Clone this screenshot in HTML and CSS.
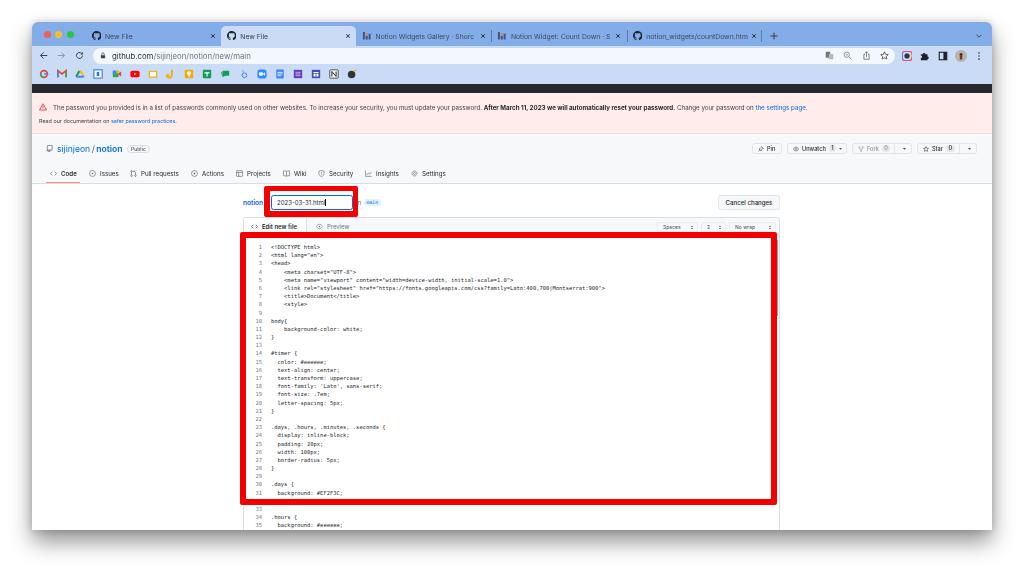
FILE: index.html
```html
<!DOCTYPE html>
<html lang="en">
<head>
<meta charset="utf-8">
<title>New File</title>
<link rel="stylesheet" href="styles.css">
</head>
<body>
<svg class="defs" width="0" height="0">
<symbol id="gh" viewBox="0 0 16 16"><path d="M8 0C3.58 0 0 3.58 0 8c0 3.54 2.29 6.53 5.47 7.59.4.07.55-.17.55-.38 0-.19-.01-.82-.01-1.49-2.01.37-2.53-.49-2.69-.94-.09-.23-.48-.94-.82-1.13-.28-.15-.68-.52-.01-.53.63-.01 1.08.58 1.23.82.72 1.21 1.87.87 2.33.66.07-.52.28-.87.51-1.07-1.78-.2-3.64-.89-3.64-3.95 0-.87.31-1.59.82-2.15-.08-.2-.36-1.02.08-2.12 0 0 .67-.21 2.2.82.64-.18 1.32-.27 2-.27.68 0 1.36.09 2 .27 1.53-1.04 2.2-.82 2.2-.82.44 1.1.16 1.92.08 2.12.51.56.82 1.27.82 2.15 0 3.07-1.87 3.75-3.65 3.95.29.25.54.73.54 1.48 0 1.07-.01 1.93-.01 2.2 0 .21.15.46.55.38A8.013 8.013 0 0016 8c0-4.42-3.58-8-8-8z"/></symbol>
<symbol id="x" viewBox="0 0 10 10"><path d="M2 2l6 6M8 2l-6 6" fill="none" stroke="currentColor" stroke-width="1.5"/></symbol>
<symbol id="bars" viewBox="0 0 10 10"><path d="M1 1h2v8H1zM4 5h2v4H4zM7 3h2v6H7z" fill="#45506a"/><path d="M4 2h2v2H4z" fill="#e0803c"/></symbol>
<symbol id="caret" viewBox="0 0 8 8"><path d="M1.500 3h5L4 6z" fill="currentColor"/></symbol>
<symbol id="code" viewBox="0 0 16 16"><path d="M5 4L1 8l4 4M11 4l4 4-4 4" fill="none" stroke="currentColor" stroke-width="1.600"/></symbol>
<symbol id="circ" viewBox="0 0 16 16"><circle cx="8" cy="8" r="6.800" fill="none" stroke="currentColor" stroke-width="1.400"/><circle cx="8" cy="8" r="1.600" fill="currentColor"/></symbol>
<symbol id="pr" viewBox="0 0 16 16"><g fill="none" stroke="currentColor" stroke-width="1.400"><circle cx="3.500" cy="3" r="1.800"/><circle cx="3.500" cy="13" r="1.800"/><circle cx="12.500" cy="13" r="1.800"/><path d="M3.500 5v6M12.500 11V5.500A2.500 2.500 0 0010 3H8M9.500 1L7.500 3l2 2"/></g></symbol>
<symbol id="play" viewBox="0 0 16 16"><circle cx="8" cy="8" r="6.800" fill="none" stroke="currentColor" stroke-width="1.400"/><path d="M6.500 5l4 3-4 3z" fill="currentColor"/></symbol>
<symbol id="table" viewBox="0 0 16 16"><g fill="none" stroke="currentColor" stroke-width="1.400"><rect x="1" y="1.500" width="14" height="13" rx="1.500"/><path d="M1 5.500h14M6 5.500v9"/></g></symbol>
<symbol id="book" viewBox="0 0 16 16"><path d="M8 3.500C6.500 2 4 2 1 2v11c3 0 5.500 0 7 1.500 1.500-1.500 4-1.500 7-1.500V2c-3 0-5.500 0-7 1.500zV14" fill="none" stroke="currentColor" stroke-width="1.400"/></symbol>
<symbol id="shield" viewBox="0 0 16 16"><path d="M8 1l6 2v5c0 3.500-3 6-6 7-3-1-6-3.500-6-7V3z" fill="none" stroke="currentColor" stroke-width="1.400"/><path d="M8 4.500v4M8 10v1.500" stroke="currentColor" stroke-width="1.400"/></symbol>
<symbol id="graph" viewBox="0 0 16 16"><path d="M1 1.500V14.500h14M4 11l3.500-4 3 2.500L15 4.500" fill="none" stroke="currentColor" stroke-width="1.400"/></symbol>
<symbol id="gear" viewBox="0 0 16 16"><circle cx="8" cy="8" r="2.300" fill="none" stroke="currentColor" stroke-width="1.300"/><circle cx="8" cy="8" r="5.600" fill="none" stroke="currentColor" stroke-width="2" stroke-dasharray="2.200 1.300"/></symbol>
<symbol id="repo" viewBox="0 0 16 16"><path d="M3 14.500V2.500A1.500 1.500 0 014.500 1H14v10.500H4.500A1.500 1.500 0 003 13M6 11.500v4l1.500-1 1.500 1v-4" fill="none" stroke="currentColor" stroke-width="1.500"/></symbol>
<symbol id="eye" viewBox="0 0 16 16"><path d="M1 8c2-3.500 4.300-5 7-5s5 1.500 7 5c-2 3.500-4.300 5-7 5s-5-1.500-7-5z" fill="none" stroke="currentColor" stroke-width="1.400"/><circle cx="8" cy="8" r="1.800" fill="currentColor"/></symbol>
<symbol id="pin" viewBox="0 0 16 16"><path d="M9.500 1.500l5 5-2.500.8-3 3-.6 3L2.600 7.500l3-.6 3-3zM5.500 10.500L1.500 14.500" fill="none" stroke="currentColor" stroke-width="1.400"/></symbol>
<symbol id="fork" viewBox="0 0 16 16"><g fill="none" stroke="currentColor" stroke-width="1.400"><circle cx="3.500" cy="3" r="1.700"/><circle cx="12.500" cy="3" r="1.700"/><circle cx="8" cy="13" r="1.700"/><path d="M3.500 5v1.500a1.500 1.500 0 001.500 1.500h6a1.500 1.500 0 001.500-1.500V5M8 8v3"/></g></symbol>
<symbol id="star" viewBox="0 0 16 16"><path d="M8 1.500l2 4.300 4.700.6-3.500 3.200.9 4.700L8 12l-4.100 2.300.9-4.700L1.300 6.400 6 5.800z" fill="none" stroke="currentColor" stroke-width="1.400"/></symbol>
<symbol id="sort" viewBox="0 0 8 10"><path d="M1.500 4L4 1.500 6.500 4zM1.500 6L4 8.500 6.500 6z" fill="currentColor"/></symbol>
</svg>

<div class="window">
  <div class="tabstrip">
    <div class="lights"><i class="light red"></i><i class="light amber"></i><i class="light green"></i></div>
    <div class="tab"><svg class="favicon"><use href="#gh"/></svg><span class="tab-title">New File</span><svg class="tab-x"><use href="#x"/></svg></div>
    <div class="tab active"><svg class="favicon"><use href="#gh"/></svg><span class="tab-title">New File</span><svg class="tab-x"><use href="#x"/></svg></div>
    <div class="tab"><svg class="favicon"><use href="#bars"/></svg><span class="tab-title">Notion Widgets Gallery · Shorc</span><svg class="tab-x"><use href="#x"/></svg></div>
    <div class="tab sep"><svg class="favicon"><use href="#bars"/></svg><span class="tab-title">Notion Widget: Count Down · S</span><svg class="tab-x"><use href="#x"/></svg></div>
    <div class="tab sep end"><svg class="favicon"><use href="#gh"/></svg><span class="tab-title">notion_widgets/countDown.htm</span><svg class="tab-x"><use href="#x"/></svg></div>
    <svg class="newtab" viewBox="0 0 10 10"><path d="M5 .5v9M.5 5h9" stroke="#3c4043" stroke-width="1.300"/></svg>
    <svg class="tabchev" viewBox="0 0 10 10"><path d="M2 3.500l3 3 3-3" fill="none" stroke="#3c4043" stroke-width="1.200"/></svg>
  </div>

  <div class="toolbar">
    <svg class="navbtn" viewBox="0 0 12 12"><path d="M11 6H2M6 2L2 6l4 4" fill="none" stroke="#3c4043" stroke-width="1.300"/></svg>
    <svg class="navbtn" viewBox="0 0 12 12"><path d="M1 6h9M6 2l4 4-4 4" fill="none" stroke="#8a97ab" stroke-width="1.300"/></svg>
    <svg class="navbtn" viewBox="0 0 12 12"><path d="M10 6a4 4 0 11-1.200-2.900" fill="none" stroke="#3c4043" stroke-width="1.300"/><path d="M10.500 1v3.500H7z" fill="#3c4043"/></svg>
    <div class="omnibox">
      <svg class="lock" viewBox="0 0 8 10"><path d="M1 4.500h6V9H1z" fill="#3c4043"/><path d="M2.300 4.500V3a1.700 1.700 0 013.400 0v1.500" fill="none" stroke="#3c4043"/></svg>
      <span class="url"><b>github.com</b>/sijinjeon/notion/new/main</span>
      <div class="omni-icons">
        <svg class="omni-icon" viewBox="0 0 12 12"><rect x="1" y="1" width="6" height="8" fill="#70757a"/><rect x="5" y="4" width="6" height="7" fill="#b4b9c0"/></svg>
        <svg class="omni-icon" viewBox="0 0 12 12"><circle cx="5" cy="5" r="3.500" fill="none" stroke="#70757a"/><path d="M7.500 7.500L11 11M3.500 5h3" stroke="#70757a"/></svg>
        <svg class="omni-icon" viewBox="0 0 12 12"><path d="M4 4.500H2.500V11h7V4.500H8M6 8V1M4 3l2-2 2 2" fill="none" stroke="#5f6368"/></svg>
        <svg class="omni-icon" viewBox="0 0 16 16"><use href="#star" color="#3c4043"/></svg>
      </div>
    </div>
    <div class="ext-icons">
      <svg class="ext" viewBox="0 0 12 12"><rect x=".5" y=".5" width="11" height="11" rx="2.500" fill="none" stroke="#e0508f" stroke-width="1.500"/><rect x="3" y="3" width="6" height="6" rx="2" fill="#334"/><path d="M.5 8v-5" stroke="#4a8fe0" stroke-width="1.500"/><path d="M11.500 3v5" stroke="#f0b020" stroke-width="1.500"/></svg>
      <svg class="ext" viewBox="0 0 12 12"><path d="M1 4h2.500a1.500 1.500 0 013 0H9v2.500a1.500 1.500 0 010 3V11H1V8.500a1.500 1.500 0 000-3z" fill="#202124"/></svg>
      <svg class="ext" viewBox="0 0 12 12"><rect x="1.500" y="1.500" width="9" height="9" fill="none" stroke="#202124" stroke-width="1.300"/><rect x="6.500" y="1.500" width="4" height="9" fill="#202124"/></svg>
      <svg class="ext avatar" viewBox="0 0 12 12"><circle cx="6" cy="6" r="6" fill="#b8b4ac"/><circle cx="6" cy="4.500" r="1.500" fill="#4a2a20"/><rect x="4.800" y="6" width="2.400" height="3.500" fill="#7a3020"/></svg>
      <svg class="ext" viewBox="0 0 12 12"><circle cx="6" cy="2.500" r="1" fill="#3c4043"/><circle cx="6" cy="6" r="1" fill="#3c4043"/><circle cx="6" cy="9.500" r="1" fill="#3c4043"/></svg>
    </div>
  </div>

  <div class="bookmarks">
    <svg class="bm" viewBox="0 0 12 12"><circle cx="6" cy="6" r="4" fill="none" stroke="#ea4335" stroke-width="2"/><path d="M2 6a4 4 0 004 4" fill="none" stroke="#34a853" stroke-width="2"/><path d="M6 6h5" stroke="#4285f4" stroke-width="2"/></svg>
    <svg class="bm" viewBox="0 0 12 12"><path d="M1 10V2l5 4 5-4v8" fill="none" stroke="#ea4335" stroke-width="2"/><path d="M1 10V3" stroke="#4285f4" stroke-width="2"/><path d="M11 10V3" stroke="#34a853" stroke-width="2"/></svg>
    <svg class="bm" viewBox="0 0 12 12"><path d="M4.500 1.500h3L11.500 8H8.500z" fill="#fbbc04"/><path d="M4.500 1.500L.5 8 2 10.500 6 3.500z" fill="#0f9d58"/><path d="M2 10.500h8L11.500 8h-8z" fill="#4285f4"/></svg>
    <svg class="bm" viewBox="0 0 12 12"><rect x="1" y="1" width="10" height="10" fill="#fff" stroke="#4285f4" stroke-width="1.500"/><rect x="4.500" y="3.500" width="3" height="5" fill="#1a73e8"/><path d="M8 11l3-3v3z" fill="#fbbc04"/></svg>
    <svg class="bm" viewBox="0 0 12 12"><rect x="1" y="2" width="7" height="8" rx="1" fill="#34a853"/><rect x="1" y="2" width="4" height="4" fill="#4285f4"/><path d="M8 2h-3v3h3z" fill="#fbbc04"/><path d="M8 5l3-2v6L8 7z" fill="#ea4335"/></svg>
    <svg class="bm" viewBox="0 0 12 12"><rect x=".5" y="2" width="11" height="8" rx="2" fill="#f00"/><path d="M5 4.500L7.500 6 5 7.500z" fill="#fff"/></svg>
    <svg class="bm" viewBox="0 0 12 12"><rect x="1" y="2" width="10" height="8.500" rx="1" fill="#f4b400"/><rect x="2.500" y="3.500" width="7" height="5.500" fill="#fff"/></svg>
    <svg class="bm" viewBox="0 0 12 12"><path d="M7 1v6.500a3 3 0 01-6 0h3" fill="none" stroke="#f9ab00" stroke-width="2.200"/></svg>
    <svg class="bm" viewBox="0 0 12 12"><rect x="1" y="1" width="10" height="10" rx="1" fill="#f9ab00"/><circle cx="6" cy="5" r="2.300" fill="#fff"/><rect x="4.800" y="7.500" width="2.400" height="1.500" fill="#fff"/></svg>
    <svg class="bm" viewBox="0 0 12 12"><rect x="1" y="1" width="10" height="10" rx="1" fill="#0f9d58"/><path d="M3 4h6v1.300H3zM5.400 4h1.300v5H5.400z" fill="#fff"/></svg>
    <svg class="bm" viewBox="0 0 12 12"><path d="M3 2h8v6H6l-3 2z" fill="#0f9d58"/><path d="M1 4h2v6z" fill="#34a853"/></svg>
    <svg class="bm" viewBox="0 0 12 12"><circle cx="6.500" cy="7.500" r="2.800" fill="none" stroke="#4285f4" stroke-width="1.200"/><path d="M4 1l2 4" stroke="#8ab4f8" stroke-width="1.400"/></svg>
    <svg class="bm" viewBox="0 0 12 12"><rect x=".5" y=".5" width="11" height="11" rx="3" fill="#2d8cff"/><rect x="2.500" y="4" width="4.500" height="4" rx="1" fill="#fff"/><path d="M7.500 5.500L9.500 4v4l-2-1.500z" fill="#fff"/></svg>
    <svg class="bm" viewBox="0 0 12 12"><rect x="1.500" y=".5" width="9" height="11" rx="1" fill="#4285f4"/><path d="M3 4h6M3 6h6M3 8h4" stroke="#fff"/></svg>
    <svg class="bm" viewBox="0 0 12 12"><rect x="1" y="1" width="10" height="10" fill="#673ab7"/><path d="M3 4h6M3 6h6M3 8h6" stroke="#d1c4e9"/></svg>
    <svg class="bm" viewBox="0 0 12 12"><rect x="1" y="1" width="10" height="10" fill="#3f51b5"/><path d="M3 3.500h6v1.500H3zM3 6h2.500v3H3zM6.500 6H9v3H6.500z" fill="#fff"/></svg>
    <svg class="bm" viewBox="0 0 12 12"><rect x="1" y="1" width="10" height="10" rx="1" fill="#fff" stroke="#333"/><path d="M3.500 3v6M8.500 3v6M3.500 3l5 6" stroke="#222" stroke-width="1.200"/></svg>
    <svg class="bm" viewBox="0 0 12 12"><circle cx="5.500" cy="6.500" r="4.500" fill="#333"/><path d="M8 3l3-2" stroke="#f4b400" stroke-width="1.500"/></svg>
  </div>

  <div class="ghbar"></div>

  <div class="alert">
    <div class="alert-line">
      <svg class="alert-icon" viewBox="0 0 16 16"><path d="M8 1.500L15 14H1z" fill="none" stroke="#cf222e" stroke-width="1.500" stroke-linejoin="round"/><path d="M8 6v4M8 11v1.500" stroke="#cf222e" stroke-width="1.400"/></svg>
      <span>The password you provided is in a list of passwords commonly used on other websites. To increase your security, you must update your password. <b>After March 11, 2023 we will automatically reset your password.</b> Change your password on <a class="link">the settings page</a>.</span>
    </div>
    <div class="alert-sub">Read our documentation on <a class="link">safer password practices</a>.</div>
  </div>

  <div class="repohead">
    <div class="repo-row">
      <div class="repo-name">
        <svg class="repo-icon"><use href="#repo"/></svg>
        <a class="owner">sijinjeon</a><span class="slash">/</span><a class="repo">notion</a>
        <span class="pill">Public</span>
      </div>
      <div class="repo-actions">
        <div class="rbtn w-pin"><svg class="ri"><use href="#pin"/></svg><span>Pin</span></div>
        <div class="rbtn w-watch"><svg class="ri"><use href="#eye"/></svg><span>Unwatch</span><i class="count">1</i><svg class="rc"><use href="#caret"/></svg></div>
        <div class="rbtn w-fork muted"><svg class="ri"><use href="#fork"/></svg><span>Fork</span><i class="count">0</i><em class="divider"></em><svg class="rc"><use href="#caret"/></svg></div>
        <div class="rbtn w-star"><svg class="ri"><use href="#star"/></svg><span>Star</span><i class="count">0</i><em class="divider"></em><svg class="rc"><use href="#caret"/></svg></div>
      </div>
    </div>
    <nav class="nav">
      <a class="nav-item current w-code"><svg class="ni"><use href="#code"/></svg>Code</a>
      <a class="nav-item w-issues"><svg class="ni"><use href="#circ"/></svg>Issues</a>
      <a class="nav-item w-pr"><svg class="ni"><use href="#pr"/></svg>Pull requests</a>
      <a class="nav-item w-act"><svg class="ni"><use href="#play"/></svg>Actions</a>
      <a class="nav-item w-proj"><svg class="ni"><use href="#table"/></svg>Projects</a>
      <a class="nav-item w-wiki"><svg class="ni"><use href="#book"/></svg>Wiki</a>
      <a class="nav-item w-sec"><svg class="ni"><use href="#shield"/></svg>Security</a>
      <a class="nav-item w-ins"><svg class="ni"><use href="#graph"/></svg>Insights</a>
      <a class="nav-item"><svg class="ni"><use href="#gear"/></svg>Settings</a>
    </nav>
  </div>

  <main class="content">
    <div class="column">
      <div class="file-row">
        <a class="crumb">notion</a>
        <div class="file-input">2023-03-31.html<i class="caret-line"></i></div>
        <span class="in">in</span>
        <code class="branch">main</code>
        <div class="cancel">Cancel changes</div>
      </div>
      <div class="editor">
        <div class="editor-head">
          <div class="etab on"><svg class="ei"><use href="#code"/></svg>Edit new file</div>
          <div class="etab off"><svg class="ei"><use href="#eye"/></svg>Preview</div>
          <div class="selects">
            <div class="sel w-sp">Spaces<svg class="so"><use href="#sort"/></svg></div>
            <div class="sel w-two">2<svg class="so"><use href="#sort"/></svg></div>
            <div class="sel w-wrap">No wrap<svg class="so"><use href="#sort"/></svg></div>
          </div>
        </div>
        <div class="code-body">
<pre class="nums">1
2
3
4
5
6
7
8
9
10
11
12
13
14
15
16
17
18
19
20
21
22
23
24
25
26
27
28
29
30
31
32
33
34
35
36</pre>
<pre class="code">&lt;!DOCTYPE html&gt;
&lt;html lang="en"&gt;
&lt;head&gt;
    &lt;meta charset="UTF-8"&gt;
    &lt;meta name="viewport" content="width=device-width, initial-scale=1.0"&gt;
    &lt;link rel="stylesheet" href="https://fonts.googleapis.com/css?family=Lato:400,700|Montserrat:900"&gt;
    &lt;title&gt;Document&lt;/title&gt;
    &lt;style&gt;

body{
    background-color: white;
}

#timer {
  color: #eeeeee;
  text-align: center;
  text-transform: uppercase;
  font-family: 'Lato', sans-serif;
  font-size: .7em;
  letter-spacing: 5px;
}

.days, .hours, .minutes, .seconds {
  display: inline-block;
  padding: 20px;
  width: 100px;
  border-radius: 5px;
}

.days {
  background: #EF2F3C;
}

.hours {
  background: #eeeeee;
  color: #000000;</pre>
          <div class="scrollbar"></div>
        </div>
      </div>
    </div>
    <div class="mark mark-name"></div>
    <div class="mark mark-code"></div>
  </main>
</div>
</body>
</html>
```
FILE: styles.css
```css
* { box-sizing: border-box; }
html, body { margin: 0; height: 573px; overflow: hidden; background: #fff; }
body { padding: 22px 32px 0; font-family: Inter, "Liberation Sans", sans-serif; color: #24292f; }
.defs { position: absolute; }

.window {
  height: 508px; width: 960px; border-radius: 6px 6px 0 0; overflow: hidden;
  display: flex; flex-direction: column; background: #fff;
  box-shadow: 0 12px 22px rgba(0,0,0,.42), 0 0 8px rgba(0,0,0,.18);
  filter: blur(.4px);
}

.tabstrip { height: 24px; background: #82ade9; display: flex; align-items: flex-end; flex: none; }
.lights { width: 53.500px; height: 24px; display: flex; align-items: center; gap: 4.700px; padding: 0 0 0 11.500px; }
.light { width: 7px; height: 7px; border-radius: 50%; display: block; }
.red { background: #ee5f57; } .amber { background: #f5bd2f; } .green { background: #29c73f; }
.tab { width: 135.300px; height: 20px; display: flex; align-items: center; padding: 0 0 0 6px; position: relative; font-size: 6.800px; color: #3f4a5c; flex: none; }
.tab.active { background: #c9dbf5; border-radius: 5px 5px 0 0; color: #3c4043; }
.tab.sep::before { content: ""; position: absolute; left: 0; top: 4px; height: 12px; width: 1px; background: #5f7aa3; }
.tab.end::after { content: ""; position: absolute; right: 0; top: 4px; height: 12px; width: 1px; background: #5f7aa3; }
.favicon { width: 9.500px; height: 9.500px; flex: none; margin-right: 4px; fill: #1f2328; }
.tab-title { width: 103px; white-space: nowrap; overflow: hidden; }
.tab-x { width: 6px; height: 6px; margin-left: 1.500px; flex: none; color: #26282c; }
.newtab { width: 8px; height: 8px; margin: 0 0 6px 8px; flex: none; }
.tabchev { width: 8px; height: 8px; margin: 0 0 6px 197px; flex: none; }

.toolbar { height: 19px; flex: none; background: #c9dbf5; display: flex; align-items: center; padding: 0 8px 0 7px; gap: 9px; }
.navbtn { width: 9px; height: 9px; flex: none; }
.omnibox { width: 802px; height: 16px; flex: none; border-radius: 8px; background: #f3f7fe; display: flex; align-items: center; padding: 0 6px 0 7px; font-size: 7.800px; }
.lock { width: 6px; height: 7px; margin-right: 6px; flex: none; }
.url { color: #6f7782; }
.url b { color: #2b2f34; font-weight: 400; }
.omni-icons { margin-left: auto; display: flex; gap: 9.500px; }
.omni-icon { width: 9px; height: 9px; }
.ext-icons { display: flex; gap: 8px; margin-left: -2px; align-items: center; }
.ext { width: 10px; height: 10px; flex: none; }
.avatar { width: 12px; height: 12px; margin: 0 -1px; }

.bookmarks { height: 19px; flex: none; background: #c9dbf5; display: flex; align-items: center; gap: 8.150px; padding: 0 0 2px 7px; }
.bm { width: 10px; height: 10px; flex: none; }

.ghbar { height: 9px; flex: none; background: #24292f; }

.alert { height: 41px; flex: none; background: #ffeceb; border-bottom: 1px solid #f6dcdc; padding: 9px 0 0 7px; font-size: 6.180px; color: #3a3f46; }
.alert-line { display: flex; align-items: center; height: 10px; gap: 6px; white-space: nowrap; }
.alert-icon { width: 8px; height: 8px; flex: none; }
.alert-sub { font-size: 5.400px; margin-top: 6px; white-space: nowrap; }
.alert b { font-weight: 700; color: #24292f; }
.link { color: #0969da; }

.repohead { height: 50px; flex: none; background: #f6f8fa; border-bottom: 1px solid #d8dee4; padding: 9px 0 0; display: flex; flex-direction: column; }
.repo-row { display: flex; height: 11px; align-items: center; padding: 0 15px 0 14px; }
.repo-name { display: flex; align-items: center; font-size: 8.600px; }
.repo-icon { width: 7px; height: 7px; margin-right: 4px; color: #57606a; fill: none; }
.owner { color: #0969da; }
.slash { color: #57606a; margin: 0 1.500px; }
.repo { color: #0969da; font-weight: 600; }
.pill { font-size: 5px; font-weight: 500; color: #57606a; border: 1px solid #d8dee4; border-radius: 5px; height: 8px; padding: 0 3.500px; margin-left: 4px; display: flex; align-items: center; }
.repo-actions { margin-left: auto; display: flex; gap: 5px; }
.rbtn { height: 11px; background: #f6f8fa; border: 1px solid #e1e4e8; border-radius: 2.500px; display: flex; align-items: center; font-size: 5.600px; font-weight: 500; padding: 0 0 0 5px; color: #24292f; gap: 2px; }
.rbtn.muted { color: #8c959f; }
.w-pin { width: 30px; } .w-watch { width: 60px; } .w-fork { width: 60px; } .w-star { width: 60px; }
.ri { width: 6px; height: 6px; flex: none; margin-right: 1px; }
.count { font-style: normal; background: #e4e7ea; border-radius: 4px; padding: 0 2.500px; margin-left: 1px; line-height: 7px; }
.divider { width: 1px; height: 9px; background: #e1e4e8; margin-left: auto; }
.rc { width: 5px; height: 5px; flex: none; margin: 0 4px 0 auto; color: #444c56; }
.divider + .rc { margin-left: 5px; }

.nav { display: flex; height: 20px; margin-top: 9px; padding-left: 14px; font-size: 6.200px; color: #24292f; }
.nav-item { display: flex; align-items: center; height: 20px; padding: 1px 0 0 3.500px; flex: none; }
.ni { width: 7px; height: 7px; margin-right: 4.500px; color: #57606a; flex: none; }
.nav-item.current { font-weight: 600; border-bottom: 1.500px solid #fd8c73; }
.w-code { width: 34px; margin-right: 5px; } .w-issues { width: 41px; } .w-pr { width: 61px; } .w-act { width: 45px; }
.w-proj { width: 47px; } .w-wiki { width: 35px; } .w-sec { width: 47px; } .w-ins { width: 46px; }

.content { flex: 1; min-height: 0; position: relative; background: #fff; padding: 11px 0 0 211px; }
.column { width: 537px; }
.file-row { display: flex; align-items: center; height: 15px; font-size: 6.100px; }
.crumb { color: #0969da; font-weight: 600; width: 28px; font-size: 6.600px; }
.file-input { width: 82px; height: 15px; border: 1px solid #0969da; border-radius: 2.500px; background: #fff; display: flex; align-items: center; padding-left: 5px; color: #24292f; font-size: 6.050px; }
.caret-line { width: .7px; height: 7px; background: #111; display: block; }
.in { margin-left: 3px; color: #57606a; }
.branch { margin-left: 3px; font-family: "DejaVu Sans Mono", monospace; font-size: 4.800px; color: #0969da; background: #ddf4ff; border-radius: 3px; padding: 1px 2.500px; }
.cancel { margin-left: auto; width: 62px; height: 15px; background: #f6f8fa; border: 1px solid #e3e6ea; border-radius: 2.500px; display: flex; align-items: center; justify-content: center; font-size: 6.100px; font-weight: 500; }

.editor { margin-top: 7px; border: 1px solid #d8dee4; border-bottom: 0; border-radius: 3px 3px 0 0; }
.editor-head { height: 17px; background: #f6f8fa; border-bottom: 1px solid #d8dee4; display: flex; font-size: 5.950px; }
.etab { display: flex; align-items: center; height: 17px; }
.etab.on { width: 63px; background: #fff; border-right: 1px solid #d8dee4; padding-left: 7px; font-weight: 600; }
.etab.off { padding-left: 9px; color: #6e7781; }
.ei { width: 7px; height: 7px; margin-right: 4px; flex: none; }
.selects { margin-left: auto; display: flex; gap: 3px; padding: 4px 3px 0 0; }
.sel { height: 10px; background: #f6f8fa; border: 1px solid #e9ebee; border-radius: 2.500px; display: flex; align-items: center; justify-content: space-between; padding: 0 3px 0 5px; font-size: 5px; color: #444c56; }
.w-sp { width: 41px; } .w-two { width: 25px; } .w-wrap { width: 47px; }
.so { width: 4px; height: 5px; flex: none; color: #57606a; }

.code-body { display: flex; position: relative; padding-top: 8px; height: 400px; font-family: "DejaVu Sans Mono", monospace; font-size: 5.450px; line-height: 8.180px; }
.nums, .code { margin: 0; font: inherit; }
.nums { width: 18px; text-align: right; color: #6e7781; margin-right: 9px; flex: none; }
.code { color: #24292f; }
.scrollbar { position: absolute; right: 1px; top: 5px; width: 3px; height: 76px; background: #9b9b9b; }

.mark { position: absolute; border-style: solid; border-color: #f50000; border-radius: 2px; }
.mark-name { left: 232px; top: 2px; width: 94px; height: 31px; border-width: 5px 5px 6px 6px; }
.mark-code { left: 208px; top: 48px; width: 537px; height: 273px; border-width: 6px 6px 6px 6px; }
```
